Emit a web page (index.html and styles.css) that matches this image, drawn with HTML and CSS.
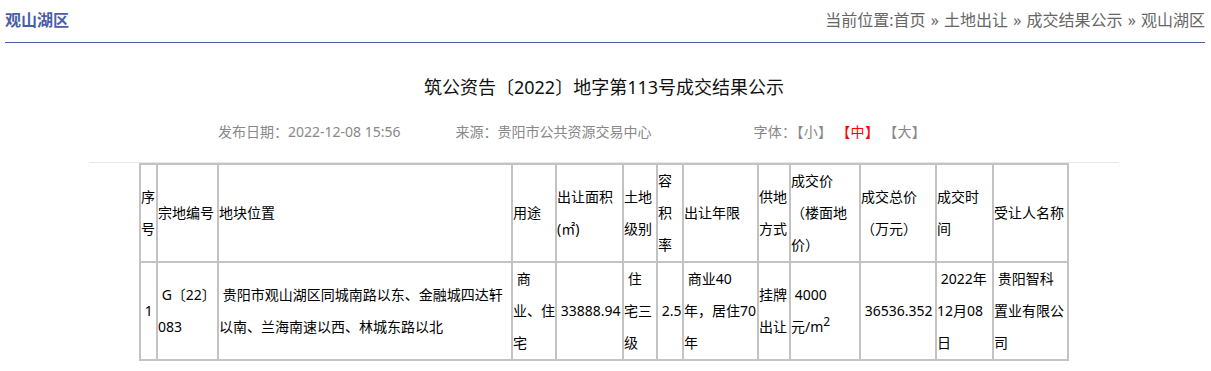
FILE: index.html
```html
<!DOCTYPE html>
<html lang="zh-CN">
<head>
<meta charset="utf-8">
<title>观山湖区</title>
<link rel="stylesheet" href="styles.css">
</head>
<body>
<div class="topbar">
  <div class="area">观山湖区</div>
  <div class="crumb">当前位置:首页 » 土地出让 » 成交结果公示 » 观山湖区</div>
</div>
<div class="article">
  <h1 class="title">筑公资告〔2022〕地字第113号成交结果公示</h1>
  <div class="info">
    <span class="date">发布日期：2022-12-08 15:56</span>
    <span class="source">来源：贵阳市公共资源交易中心</span>
    <span class="fsize">字体：<span>【小】</span> <span class="on">【中】</span> <span>【大】</span></span>
  </div>
  <table class="grid">
    <colgroup>
      <col class="c1"><col class="c2"><col class="c3"><col class="c4"><col class="c5"><col class="c6"><col class="c7"><col class="c8"><col class="c9"><col class="c10"><col class="c11"><col class="c12"><col class="c13">
    </colgroup>
    <tr>
      <td>序<br>号</td>
      <td>宗地编号</td>
      <td>地块位置</td>
      <td>用途</td>
      <td>出让面积<br>(㎡)</td>
      <td>土地<br>级别</td>
      <td>容<br>积<br>率</td>
      <td>出让年限</td>
      <td>供地<br>方式</td>
      <td>成交价<br>（楼面地<br>价）</td>
      <td>成交总价<br>（万元）</td>
      <td>成交时<br>间</td>
      <td>受让人名称</td>
    </tr>
    <tr>
      <td>&nbsp;1</td>
      <td>&nbsp;G〔22〕<br>083</td>
      <td>&nbsp;贵阳市观山湖区同城南路以东、金融城四达轩<br>以南、兰海南速以西、林城东路以北</td>
      <td>&nbsp;商<br>业、住<br>宅</td>
      <td>&nbsp;33888.94</td>
      <td>&nbsp;住<br>宅三<br>级</td>
      <td>&nbsp;2.5</td>
      <td>&nbsp;商业40<br>年，居住70<br>年</td>
      <td>挂牌<br>出让</td>
      <td>&nbsp;4000<br>元/m<sup>2</sup></td>
      <td>&nbsp;36536.352</td>
      <td>&nbsp;2022年<br>12月08<br>日</td>
      <td>&nbsp;贵阳智科<br>置业有限公<br>司</td>
    </tr>
  </table>
</div>
</body>
</html>
```
FILE: styles.css
```css
html, body {
  margin: 0;
  padding: 0;
  background: #fff;
}
body {
  font-family: "Noto Sans", "Noto Sans CJK SC", sans-serif;
  color: #000;
}
.topbar {
  margin: 0 6px 0 5px;
  height: 42px;
  display: flex;
  align-items: center;
  justify-content: space-between;
  border-bottom: 1px solid #4a60a6;
}
.area {
  font-size: 16px;
  font-weight: bold;
  color: #4a5ea6;
  line-height: 20px;
  margin-top: -2px;
}
.crumb {
  font-size: 16px;
  color: #666;
  line-height: 20px;
  margin-top: -2px;
  word-spacing: 1px;
}
.article {
  width: 1030px;
  margin: 0 0 0 89px;
}
.title {
  margin: 29px 0 0;
  font-size: 18px;
  font-weight: normal;
  line-height: 30px;
  text-align: center;
  color: #111;
}
.info {
  margin-top: 20px;
  padding-bottom: 20px;
  border-bottom: 1px solid #e8e8e8;
  font-size: 14px;
  line-height: 20px;
  color: #888;
  display: flex;
}
.date { margin-left: 129px; }
.source { margin-left: 55px; }
.fsize { margin-left: 102px; letter-spacing: 0.3px; }
.fsize .on { color: #f00; }
.grid {
  margin: 0 auto;
  border-collapse: collapse;
  table-layout: fixed;
  width: 930px;
  font-size: 14px;
  line-height: 32px;
}
.grid td {
  border: 2px solid #c3c3c3;
  padding: 0;
  vertical-align: middle;
  text-align: left;
  white-space: nowrap;
  overflow: hidden;
}
.grid sup {
  font-size: 12px;
  line-height: 0;
}
.c1 { width: 17px; }
.c2 { width: 61px; }
.c3 { width: 294px; }
.c4 { width: 44px; }
.c5 { width: 67px; }
.c6 { width: 34px; }
.c7 { width: 26px; }
.c8 { width: 75px; }
.c9 { width: 32px; }
.c10 { width: 70px; }
.c11 { width: 76px; }
.c12 { width: 57px; }
.c13 { width: 75px; }
```
